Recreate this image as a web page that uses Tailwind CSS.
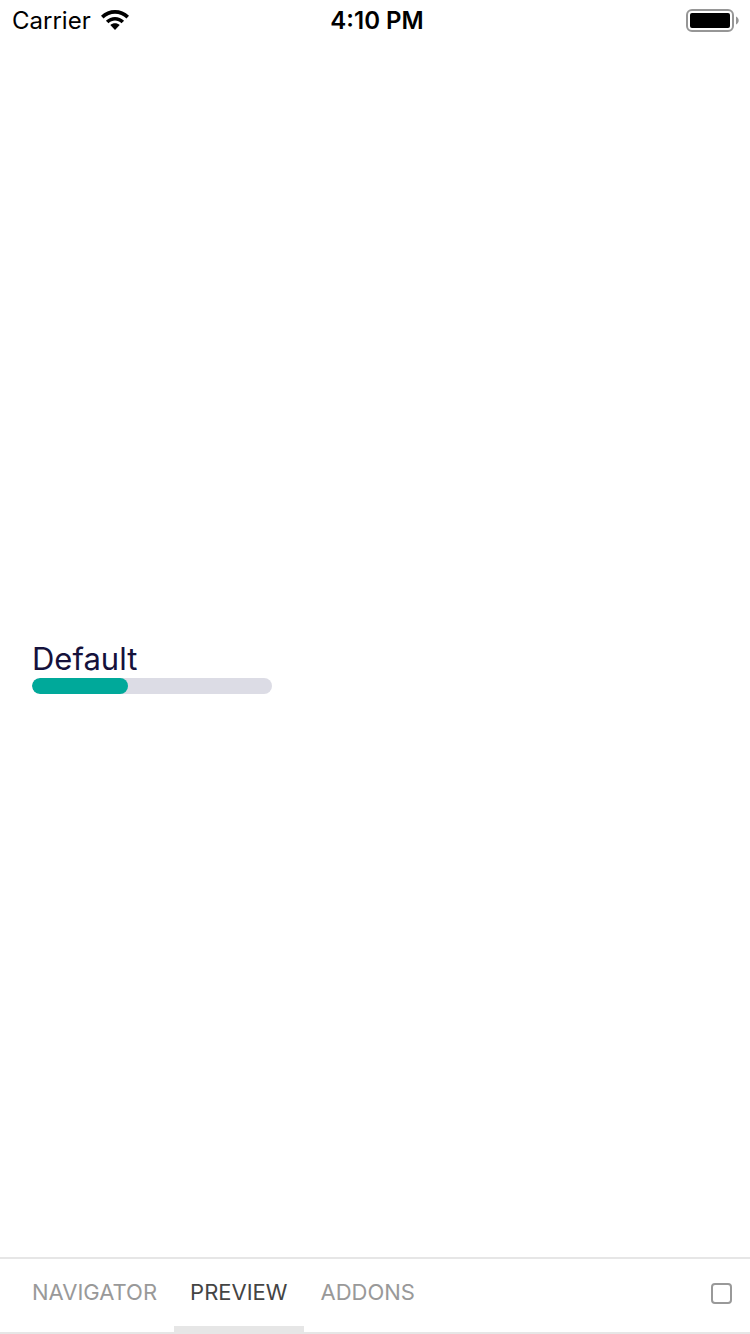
<!DOCTYPE html>
<html lang="en">
<head>
<meta charset="utf-8">
<meta name="viewport" content="width=device-width, initial-scale=1">
<title>Preview</title>
<script src="https://cdn.jsdelivr.net/npm/@tailwindcss/browser@4"></script>
</head>
<body class="flex min-h-screen flex-col bg-white font-['Inter','Liberation_Sans',sans-serif] text-black">
  <header class="grid h-10 grid-cols-[1fr_auto_1fr] items-center pr-2 pl-3">
    <div class="flex items-center gap-2.5">
      <span class="pt-0.5 text-2xl">Carrier</span>
      <svg class="h-5 w-7" viewBox="0 0 28 20" role="img" aria-label="Wi-Fi">
        <path d="M0 5.8C7.4-1.9 20.6-1.9 28 5.8L25.5 8.4C19.3 2.1 8.7 2.1 2.5 8.4Z"/>
        <path d="M4.9 10.7C10 5.6 18 5.6 23.1 10.7L20.5 13.3C16.9 9.7 11.1 9.7 7.5 13.3Z"/>
        <path d="M9.3 15.1C11.9 12.6 16.1 12.6 18.7 15.1L14 20Z"/>
      </svg>
    </div>
    <time class="pt-0.5 text-2xl font-semibold">4:10 PM</time>
    <svg class="h-6 w-14 justify-self-end" viewBox="0 0 56 24" role="img" aria-label="Battery full">
      <rect x="1" y="2" width="46" height="21" rx="5" fill="none" stroke="#969696" stroke-width="2"/>
      <rect x="4" y="5" width="40" height="15" rx="2"/>
      <path d="M50 8.5C53.6 10 53.6 15 50 16.5Z" fill="#969696"/>
    </svg>
  </header>

  <main class="flex flex-1 flex-col justify-center px-8 pt-[37px]">
    <div id="progress-label" class="text-[31px] leading-[38px] text-[#15113b]">Default</div>
    <div role="progressbar" aria-labelledby="progress-label" aria-valuemin="0" aria-valuemax="100" aria-valuenow="40" class="h-4 w-60 overflow-hidden rounded-full bg-[#dcdce5]">
      <div class="h-full rounded-full bg-[#00a99a]" style="width:40%"></div>
    </div>
  </main>

  <nav class="flex h-[77px] items-stretch justify-between border-y-2 border-[#e6e6e6] px-4 text-[22px] text-[#999999]">
    <div class="flex gap-px">
      <button type="button" class="border-b-6 border-transparent px-4">NAVIGATOR</button>
      <button type="button" class="border-b-6 border-[#e6e6e6] px-4 text-[#444444]" aria-current="page">PREVIEW</button>
      <button type="button" class="border-b-6 border-transparent px-4">ADDONS</button>
    </div>
    <button type="button" aria-label="Toggle full screen" class="border-b-4 border-transparent">
      <svg class="h-6 w-6" viewBox="0 0 24 24" fill="none" stroke="#999999" stroke-width="2">
        <rect x="2" y="2" width="19" height="19" rx="3"/>
      </svg>
    </button>
  </nav>
</body>
</html>
